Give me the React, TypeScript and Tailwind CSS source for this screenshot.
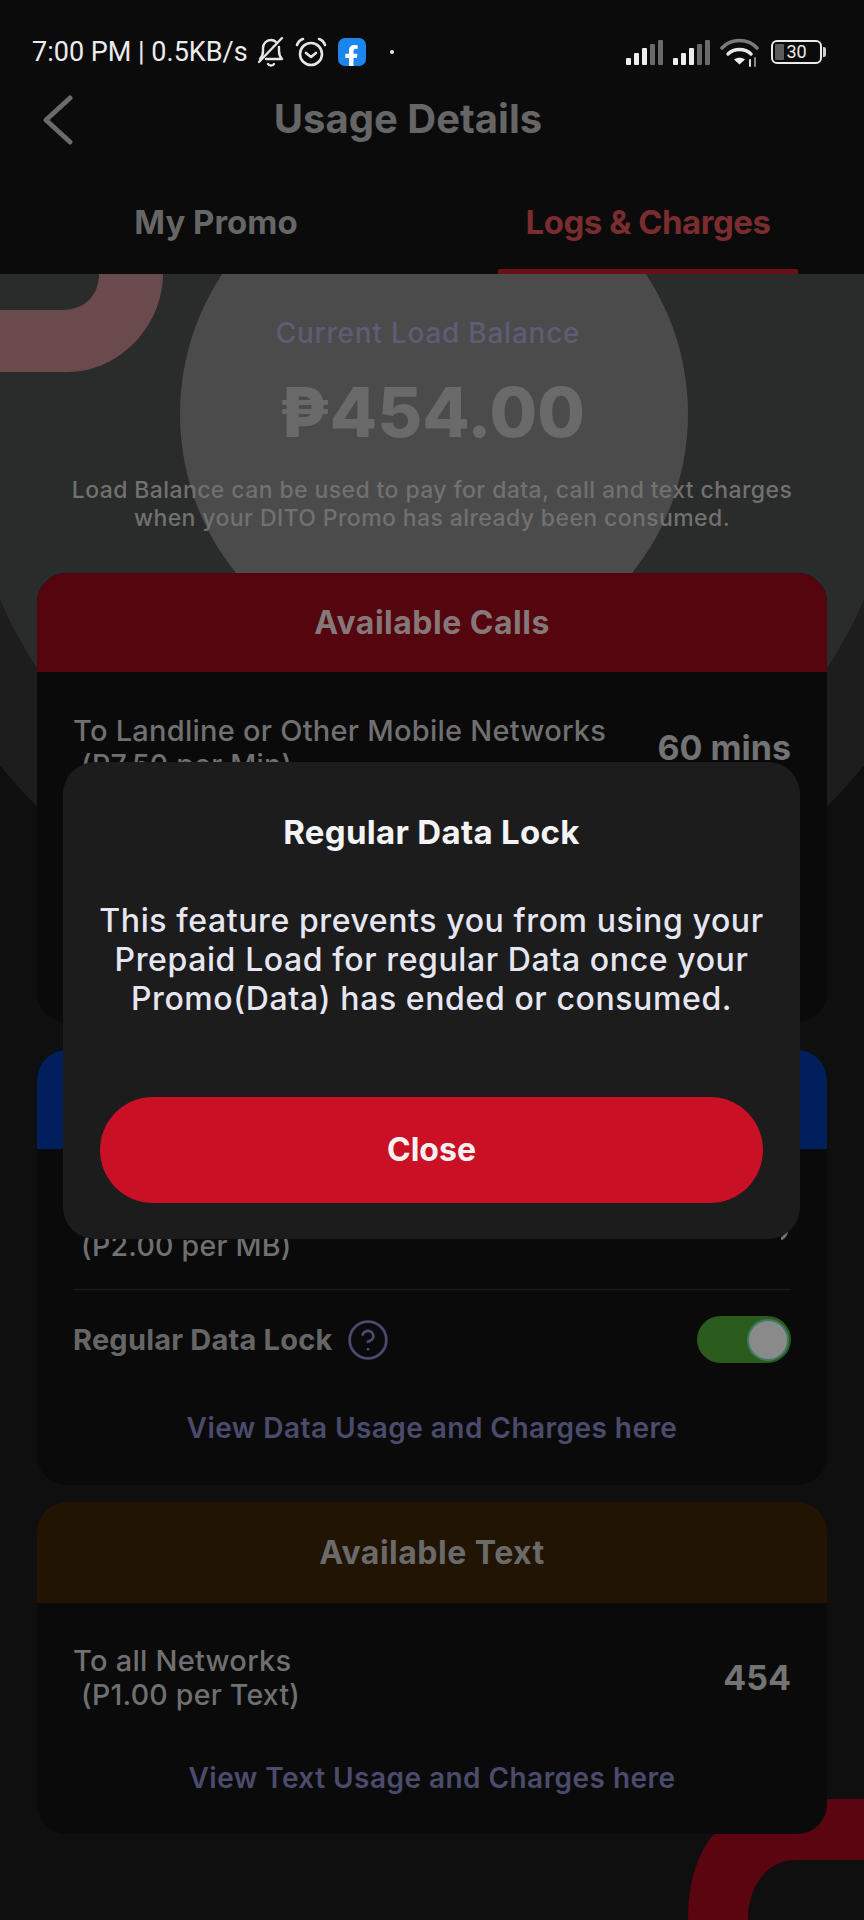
import { CircleHelp } from "lucide-react";
import { FaFacebookF } from "react-icons/fa";

function BellOffIcon() {
  return (
    <svg width="30" height="32" viewBox="0 0 30 32" fill="none" stroke="#e6e6e6" strokeWidth="2.4" strokeLinecap="round" strokeLinejoin="round">
      <path d="M4 23c2-2 3-4 3-8V12c0-4 3-8 8-8 2 0 4 1 5 2" />
      <path d="M23 11v4c0 4 1 6 3 8H10" />
      <path d="M26 2 3 26" />
      <path d="M12 28c1 2 5 2 6 0" />
    </svg>
  );
}

function AlarmIcon() {
  return (
    <svg width="32" height="31" viewBox="0 0 32 31" fill="none" stroke="#e6e6e6" strokeWidth="2.6" strokeLinecap="round" strokeLinejoin="round">
      <circle cx="16" cy="17" r="11" />
      <path d="M2 8c1-3 3-5 6-6" />
      <path d="M30 8c-1-3-3-5-6-6" />
      <path d="M11 16l5 4 5-4" />
    </svg>
  );
}

function SignalIcon() {
  const bars = [
    { x: 0, h: 7, c: "#eeeeee" },
    { x: 8, h: 12, c: "#eeeeee" },
    { x: 16, h: 17, c: "#eeeeee" },
    { x: 24, h: 21, c: "#6a6a6a" },
    { x: 32, h: 25, c: "#6a6a6a" },
  ];
  return (
    <svg width="38" height="25" viewBox="0 0 38 25">
      {bars.map((b) => (
        <rect key={b.x} x={b.x} y={25 - b.h} width="5" height={b.h} rx="1" fill={b.c} />
      ))}
    </svg>
  );
}

function WifiIcon() {
  return (
    <svg width="40" height="29" viewBox="0 0 40 29" fill="none" strokeLinecap="round">
      <path d="M2 10C11 0 28 0 37 10" stroke="#7a7a7a" strokeWidth="3.6" />
      <path d="M8 16c6-6 17-6 23 0" stroke="#e8e8e8" strokeWidth="3.4" />
      <path d="M14 21.5l5.500 5 5.500-5c-3-2.500-8-2.500-11 0z" fill="#eeeeee" />
      <path d="M30 22v6" stroke="#dddddd" strokeWidth="2" />
      <path d="M35 20v8" stroke="#888888" strokeWidth="2" />
    </svg>
  );
}

function Battery() {
  return (
    <div className="flex items-center gap-[1px]">
      <div className="relative flex h-[24px] w-[51px] items-center justify-center overflow-hidden rounded-[6px] border-[2.5px] border-[#ececec]">
        <div className="absolute inset-y-[2px] left-[2px] w-[9px] rounded-[1px] bg-[#5c5c5c]" />
        <span className="relative font-['Roboto',sans-serif] text-[18px] leading-none text-[#ececec]">30</span>
      </div>
      <div className="h-[10px] w-[3px] rounded-r-[2px] bg-[#cfcfcf]" />
    </div>
  );
}

function StatusBar() {
  return (
    <div className="flex h-[40px] items-center pl-[32px] pr-[38px] font-['Roboto',sans-serif]">
      <span className="text-[27px] leading-none text-[#ececec]">7:00 PM | 0.5KB/s</span>
      <div className="ml-[8px]">
        <BellOffIcon />
      </div>
      <div className="ml-[9px]">
        <AlarmIcon />
      </div>
      <div className="ml-[11px] flex h-[28px] w-[28px] items-end justify-center overflow-hidden rounded-[7px] bg-[#1c86ee]">
        <FaFacebookF className="translate-y-[2px] text-[23px] text-white" />
      </div>
      <div className="ml-[24px] h-[4px] w-[4px] rounded-full bg-[#e8e8e8]" />
      <div className="ml-auto flex items-center">
        <SignalIcon />
        <div className="ml-[9px]">
          <SignalIcon />
        </div>
        <div className="ml-[9px]">
          <WifiIcon />
        </div>
        <div className="ml-[11px]">
          <Battery />
        </div>
      </div>
    </div>
  );
}

function Header() {
  return (
    <header className="relative h-[274px] bg-[#0b0b0c] pt-[32px]">
      <StatusBar />
      <div className="relative flex h-[94px] items-center justify-center pr-[48px]">
        <svg className="absolute left-[42px] top-[23px]" width="32" height="50" viewBox="0 0 32 50" fill="none" stroke="#6a6a6a" strokeWidth="5" strokeLinecap="round" strokeLinejoin="round">
          <path d="M28 3 4 25l24 22" />
        </svg>
        <h1 className="text-[40px] font-bold leading-none text-[#666666]">Usage Details</h1>
      </div>
      <div className="flex h-[108px]">
        <div className="flex flex-1 flex-col items-center pt-[38px]">
          <span className="text-[33px] font-bold leading-[36px] text-[#666666]">My Promo</span>
        </div>
        <div className="flex flex-1 flex-col items-center pt-[38px]">
          <span className="text-[33px] font-bold leading-[36px] tracking-[-0.5px] text-[#7a2c2f]">Logs &amp; Charges</span>
          <div className="mt-auto h-[5px] w-[300px] bg-[#6b1015]" />
        </div>
      </div>
    </header>
  );
}

function Card({ title, headClass, titleClass, bodyClass, children }: { title?: string; headClass: string; titleClass?: string; bodyClass: string; children: React.ReactNode }) {
  return (
    <section className={"overflow-hidden rounded-[30px] bg-[#0a0a0b] " + bodyClass}>
      <div className={"flex items-center justify-center " + headClass}>
        {title && <h2 className={"text-[32px] font-bold leading-none tracking-[0.5px] " + titleClass}>{title}</h2>}
      </div>
      {children}
    </section>
  );
}

function Row({ line1, line2, value }: { line1: string; line2: string; value: React.ReactNode }) {
  return (
    <div className="flex items-center justify-between px-[36px]">
      <div className="text-[29px] font-medium leading-[34px] tracking-[0.25px] text-[#707070]">
        <div>{line1}</div>
        <div className="pl-[8px] text-[28.500px]">{line2}</div>
      </div>
      <span className="text-[34px] font-bold leading-[34px] text-[#737373]">{value}</span>
    </div>
  );
}

function ViewLink({ children, className }: { children: React.ReactNode; className: string }) {
  return (
    <div className={"h-[32px] text-center text-[28px] font-semibold leading-[32px] tracking-[0.45px] text-[#4b4b6c] " + className}>{children}</div>
  );
}

function Modal() {
  return (
    <div className="absolute left-[63px] top-[762px] flex h-[477px] w-[737px] flex-col items-center rounded-[32px] bg-[#1c1c1d] px-[37px]">
      <h3 className="mt-[51px] text-[33px] font-bold leading-[38px] tracking-[0.3px] text-[#f4f4f6]">Regular Data Lock</h3>
      <p className="mt-[50px] whitespace-nowrap text-center text-[32px] font-medium leading-[39px] tracking-[0.6px] text-[#e6e6f2]">
        This feature prevents you from using your
        <br />
        Prepaid Load for regular Data once your
        <br />
        Promo(Data) has ended or consumed.
      </p>
      <button className="mt-auto mb-[36px] h-[106px] w-full rounded-full bg-[#c91024] text-[32px] font-bold text-[#f6f0f0]">Close</button>
    </div>
  );
}

export default function App() {
  return (
    <div className="relative h-[1920px] w-[864px] overflow-hidden bg-[#0f0f10] font-['Inter',sans-serif]">
      <svg className="absolute inset-0" width="864" height="1920" viewBox="0 0 864 1920" aria-hidden="true">
        <circle cx="432" cy="414" r="557" fill="#1d1d1e" />
        <circle cx="432" cy="414" r="470" fill="#2a2b2b" />
        <circle cx="434" cy="414" r="254" fill="#4b4b4b" />
        <path d="M0 372H68C120 372 163 325 163 274H99C99 295 85 310 62 310H0Z" fill="#6b4a4e" />
        <path d="M688 1920C688 1845 725 1799 800 1799H864V1860H795C768 1860 748 1885 748 1920Z" fill="#5a0510" />
      </svg>

      <div className="relative">
        <Header />

        <div className="flex flex-col items-center pt-[41px]">
          <p className="h-[36px] pr-[8px] text-[28px] font-medium leading-[36px] tracking-[0.75px] text-[#5d5d75]">Current Load Balance</p>
          <p className="mt-[21px] h-[80px] text-[69px] font-extrabold leading-[80px] text-[#6a6a6a]">₱454.00</p>
          <p className="mt-[24px] text-center text-[23px] font-medium leading-[28px] tracking-[0.4px] text-[#717171]">
            Load Balance can be used to pay for data, call and text charges
            <br />
            when your DITO Promo has already been consumed.
          </p>
        </div>

        <div className="mt-[41px] flex flex-col px-[37px]">
          <Card title="Available Calls" headClass="h-[99px] bg-[#55050e]" titleClass="text-[#85787a]" bodyClass="h-[449px]">
            <div className="pt-[42px]">
              <Row line1="To Landline or Other Mobile Networks" line2="(P7.50 per Min)" value="60 mins" />
            </div>
          </Card>

          <div className="mt-[28px]">
            <Card headClass="h-[99px] bg-[#001f5c]" bodyClass="h-[435px]">
              <div className="pt-[46px]">
                <Row
                  line1="To all Networks"
                  line2="(P2.00 per MB)"
                  value={
                    <svg width="10" height="22" viewBox="0 0 10 22" fill="none" stroke="#737373" strokeWidth="3">
                      <path d="M6 10C6 16 4 19 0 21" />
                    </svg>
                  }
                />
              </div>
              <div className="mx-[36px] mt-[26px] h-[1px] bg-[#1e1e1e]" />
              <div className="mt-[26px] flex h-[47px] items-center px-[36px]">
                <span className="text-[29px] font-bold leading-none tracking-[0.2px] text-[#666666]">Regular Data Lock</span>
                <CircleHelp size={44} strokeWidth={1.5} className="ml-[14px] text-[#4a4a6e]" />
                <div className="ml-auto flex h-[47px] w-[94px] items-center justify-end rounded-full bg-[#2a5a1c] pr-[2px]">
                  <div className="h-[42px] w-[42px] rounded-full border-[2px] border-[#3f7a62] bg-[#8a8a8a]" />
                </div>
              </div>
              <ViewLink className="mt-[49px]">View Data Usage and Charges here</ViewLink>
            </Card>
          </div>

          <div className="mt-[17px]">
            <Card title="Available Text" headClass="h-[101px] bg-[#211403]" titleClass="text-[#6a6a6a]" bodyClass="h-[332px]">
              <div className="pt-[41px]">
                <Row line1="To all Networks" line2="(P1.00 per Text)" value="454" />
              </div>
              <ViewLink className="mt-[50px]">View Text Usage and Charges here</ViewLink>
            </Card>
          </div>
        </div>
      </div>

      <Modal />
    </div>
  );
}
